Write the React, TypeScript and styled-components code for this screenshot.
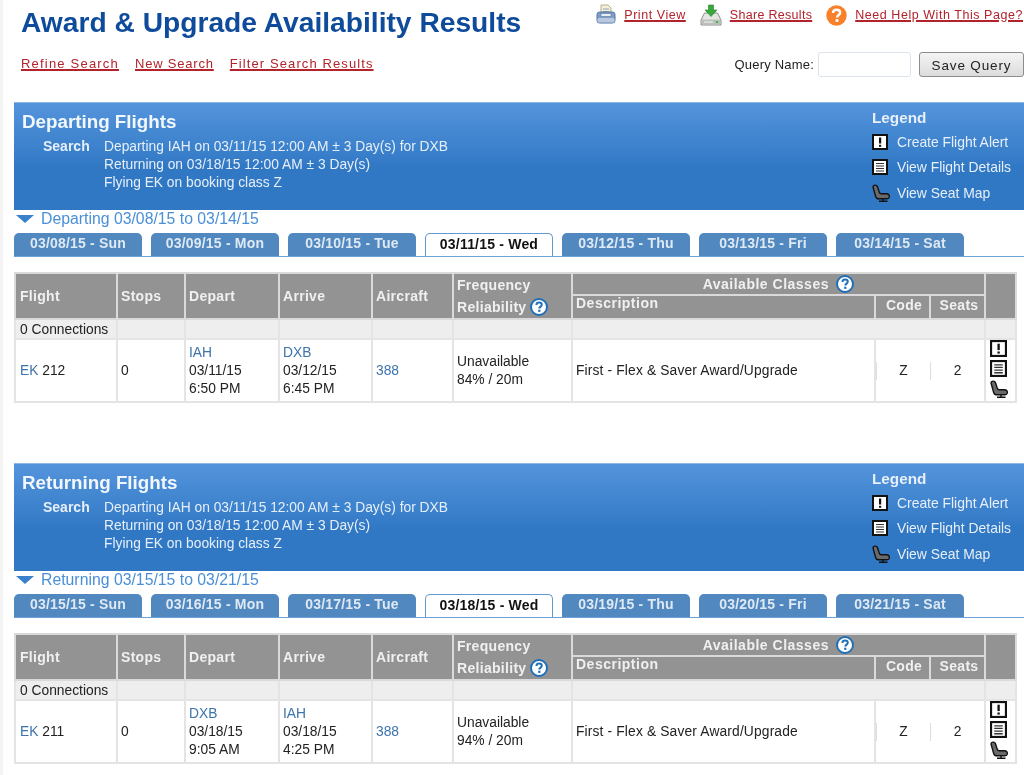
import React from "react";
import styled, { createGlobalStyle } from "styled-components";

const GlobalStyle = createGlobalStyle`
  html, body {
    margin: 0;
    padding: 0;
    background: #fff;
  }
  body {
    font-family: "Liberation Sans", Arial, sans-serif;
    color: #222;
  }
`;

type Leg = {
  title: string;
  range: string;
  tabs: string[];
  flight: string;
  from: string;
  to: string;
  departDate: string;
  departTime: string;
  arriveDate: string;
  arriveTime: string;
  reliability: string;
};

const legs: Leg[] = [
  {
    title: "Departing Flights",
    range: "Departing 03/08/15 to 03/14/15",
    tabs: ["03/08/15 - Sun", "03/09/15 - Mon", "03/10/15 - Tue", "03/11/15 - Wed", "03/12/15 - Thu", "03/13/15 - Fri", "03/14/15 - Sat"],
    flight: "212",
    from: "IAH",
    to: "DXB",
    departDate: "03/11/15",
    departTime: "6:50 PM",
    arriveDate: "03/12/15",
    arriveTime: "6:45 PM",
    reliability: "84% / 20m",
  },
  {
    title: "Returning Flights",
    range: "Returning 03/15/15 to 03/21/15",
    tabs: ["03/15/15 - Sun", "03/16/15 - Mon", "03/17/15 - Tue", "03/18/15 - Wed", "03/19/15 - Thu", "03/20/15 - Fri", "03/21/15 - Sat"],
    flight: "211",
    from: "DXB",
    to: "IAH",
    departDate: "03/18/15",
    departTime: "9:05 AM",
    arriveDate: "03/18/15",
    arriveTime: "4:25 PM",
    reliability: "94% / 20m",
  },
];

const AlertIcon = ({ size = 16 }: { size?: number }) => (
  <svg width={size} height={size} viewBox="0 0 16 16">
    <rect x="1" y="1" width="14" height="14" fill="#fff" stroke="#111" strokeWidth="2" />
    <rect x="7" y="3.5" width="2.2" height="6" fill="#111" />
    <rect x="7" y="10.8" width="2.2" height="2" fill="#111" />
  </svg>
);

const DetailsIcon = ({ size = 16 }: { size?: number }) => (
  <svg width={size} height={size} viewBox="0 0 16 16">
    <rect x="1" y="1" width="14" height="14" fill="#fff" stroke="#111" strokeWidth="2" />
    <path d="M4 4.5h8M4 7h8M4 9.5h8M4 12h8" stroke="#333" strokeWidth="1.2" />
  </svg>
);

const SeatIcon = ({ size = 18 }: { size?: number }) => (
  <svg width={size} height={size} viewBox="0 0 18 18">
    <path
      d="M1 3C1 .8 4.6 .4 5.4 2.6L7.4 8.6C7.7 9.4 8.3 9.8 9.2 9.8H14.5C16.6 9.8 17.6 11.2 17.3 13C17.1 14.2 16.2 14.8 15 14.8H7C5 14.8 4.2 14 3.6 12.4Z"
      fill="#6a6a6a"
      stroke="#111"
      strokeWidth="1.4"
    />
    <path d="M7 17.2h8.5M11 15v2" stroke="#111" strokeWidth="1.4" />
  </svg>
);

const HelpBadge = () => (
  <svg width="18" height="18" viewBox="0 0 18 18">
    <circle cx="9" cy="9" r="8" fill="#fff" stroke="#1f6fb8" strokeWidth="2" />
    <path d="M6.4 7C6.5 5.4 7.6 4.6 9.1 4.6C10.7 4.6 11.8 5.5 11.8 6.8C11.8 8.6 9.3 8.6 9.3 10.6" fill="none" stroke="#1f6fb8" strokeWidth="2" />
    <rect x="8.2" y="11.7" width="2.2" height="2.2" fill="#1f6fb8" />
  </svg>
);

const PrintIcon = () => (
  <svg width="20" height="22" viewBox="0 0 20 22">
    <path d="M5 1h7l3 3v8H5z" fill="#f6efd8" stroke="#b9ad8c" />
    <path d="M7 5h6M7 7.5h6" stroke="#8fa2bb" />
    <rect x="1" y="8" width="18" height="11" rx="2.5" fill="#7f9fc8" stroke="#55759f" />
    <rect x="1.5" y="14" width="17" height="4.5" rx="1.5" fill="#b8c9df" />
    <rect x="5" y="9.5" width="10" height="3" fill="#e8eef6" stroke="#55759f" strokeWidth=".6" />
  </svg>
);

const ShareIcon = () => (
  <svg width="22" height="22" viewBox="0 0 22 22">
    <path d="M4.5 9H17.5L21 16V21H1V16Z" fill="#e4e6e2" stroke="#8c8f8a" />
    <rect x="2" y="15.5" width="18" height="5" fill="#bcc0bb" />
    <path d="M4 18h9" stroke="#f5f5f5" />
    <rect x="16" y="17" width="2" height="2" fill="#3dbb3d" />
    <path d="M8.5 1H13.5V6H17L11 12.5L5 6H8.5Z" fill="#37a83a" stroke="#25822a" strokeWidth=".6" />
  </svg>
);

const OrangeHelp = () => (
  <svg width="21" height="21" viewBox="0 0 21 21">
    <circle cx="10.5" cy="10.5" r="10.2" fill="#f9812a" />
    <path d="M7 8C7.1 5.9 8.6 4.8 10.6 4.8C12.7 4.8 14.1 6 14.1 7.7C14.1 10 11 10 11 12.6" fill="none" stroke="#fff" strokeWidth="2.4" />
    <rect x="9.6" y="14.1" width="2.8" height="2.8" fill="#fff" />
  </svg>
);

const FlightSection = ({ leg }: { leg: Leg }) => (
  <Section>
    <Banner>
      <BannerMain>
        <BannerTitle>{leg.title}</BannerTitle>
        <SearchRow>
          <SearchLabel>Search</SearchLabel>
          <SearchLines>
            <div>Departing IAH on 03/11/15 12:00 AM ± 3 Day(s) for DXB</div>
            <div>Returning on 03/18/15 12:00 AM ± 3 Day(s)</div>
            <div>Flying EK on booking class Z</div>
          </SearchLines>
        </SearchRow>
      </BannerMain>
      <Legend>
        <LegendTitle>Legend</LegendTitle>
        <LegendRow><AlertIcon /><span>Create Flight Alert</span></LegendRow>
        <LegendRow><DetailsIcon /><span>View Flight Details</span></LegendRow>
        <LegendRow><SeatIcon /><span>View Seat Map</span></LegendRow>
      </Legend>
    </Banner>

    <RangeHeading>
      <Triangle />
      {leg.range}
    </RangeHeading>

    <TabStrip>
      {leg.tabs.map((tab, i) => (
        <Tab key={tab} $active={i === 3}>{tab}</Tab>
      ))}
    </TabStrip>

    <Results>
      <colgroup>
        <col style={{ width: 102 }} />
        <col style={{ width: 68 }} />
        <col style={{ width: 94 }} />
        <col style={{ width: 93 }} />
        <col style={{ width: 81 }} />
        <col style={{ width: 119 }} />
        <col style={{ width: 303 }} />
        <col style={{ width: 55 }} />
        <col style={{ width: 55 }} />
        <col style={{ width: 31 }} />
      </colgroup>
      <thead>
        <tr>
          <Th rowSpan={2}>Flight</Th>
          <Th rowSpan={2}>Stops</Th>
          <Th rowSpan={2}>Depart</Th>
          <Th rowSpan={2}>Arrive</Th>
          <Th rowSpan={2}>Aircraft</Th>
          <FreqTh rowSpan={2}>
            <div>Frequency</div>
            <FreqLine>Reliability <HelpBadge /></FreqLine>
          </FreqTh>
          <ClassesTh colSpan={3}>Available Classes <HelpBadge /></ClassesTh>
          <Th rowSpan={2} />
        </tr>
        <tr>
          <DescTh>Description</DescTh>
          <SubTh>Code</SubTh>
          <SubTh>Seats</SubTh>
        </tr>
      </thead>
      <tbody>
        <tr>
          <ConnCell>0 Connections</ConnCell>
          {Array.from({ length: 5 }).map((_, i) => <ConnCell key={i} />)}
          <ConnCell colSpan={3} />
          <ConnCell />
        </tr>
        <tr>
          <Td><BlueText>EK</BlueText> {leg.flight}</Td>
          <Td>0</Td>
          <Td><BlueText>{leg.from}</BlueText><br />{leg.departDate}<br />{leg.departTime}</Td>
          <Td><BlueText>{leg.to}</BlueText><br />{leg.arriveDate}<br />{leg.arriveTime}</Td>
          <Td><BlueText>388</BlueText></Td>
          <Td>Unavailable<br />{leg.reliability}</Td>
          <DescTd>First - Flex &amp; Saver Award/Upgrade</DescTd>
          <ValueTd><Divided>Z</Divided></ValueTd>
          <ValueTd><Divided>2</Divided></ValueTd>
          <ActionTd>
            <AlertIcon size={17} />
            <DetailsIcon size={17} />
            <SeatIcon size={18} />
          </ActionTd>
        </tr>
      </tbody>
    </Results>
  </Section>
);

export default function App() {
  return (
    <Page>
      <GlobalStyle />
      <Header>
        <HeaderLeft>
          <Title>Award &amp; Upgrade Availability Results</Title>
          <NavLinks>
            <NavLink href="#">Refine Search</NavLink>
            <NavLink href="#" $spacing={0.8}>New Search</NavLink>
            <NavLink href="#" $spacing={1.1}>Filter Search Results</NavLink>
          </NavLinks>
        </HeaderLeft>
        <HeaderRight>
          <Tools>
            <Tool><PrintIcon /><ToolLink href="#">Print View</ToolLink></Tool>
            <Tool><ShareIcon /><ToolLink href="#" $spacing={0.3}>Share Results</ToolLink></Tool>
            <Tool><OrangeHelp /><ToolLink href="#">Need Help With This Page?</ToolLink></Tool>
          </Tools>
          <QueryForm>
            <QueryLabel>Query Name:</QueryLabel>
            <QueryInput />
            <SaveButton>Save Query</SaveButton>
          </QueryForm>
        </HeaderRight>
      </Header>
      {legs.map((leg) => (
        <FlightSection key={leg.title} leg={leg} />
      ))}
    </Page>
  );
}

const Page = styled.div`
  width: 1024px;
  height: 775px;
  box-sizing: border-box;
  overflow: hidden;
  border-left: 3px solid #f4f4f4;
  padding-left: 11px;
  filter: blur(0.3px);
`;

const Header = styled.header`
  display: flex;
  justify-content: space-between;
  height: 102px;
`;

const HeaderLeft = styled.div`
  padding-left: 7px;
`;

const Title = styled.h1`
  margin: 0;
  padding-top: 6px;
  font-size: 28.2px;
  line-height: 32px;
  font-weight: 700;
  color: #0f4b9b;
  white-space: nowrap;
`;

const NavLinks = styled.nav`
  display: flex;
  gap: 16px;
  margin-top: 18px;
`;

const NavLink = styled.a<{ $spacing?: number }>`
  font-size: 13px;
  line-height: 16px;
  letter-spacing: ${({ $spacing }) => $spacing ?? 1.2}px;
  color: #b2232b;
  text-decoration: underline;
  text-decoration-thickness: 1.5px;
  white-space: nowrap;
`;

const ToolLink = styled.a<{ $spacing?: number }>`
  font-size: 12.5px;
  line-height: 15px;
  letter-spacing: ${({ $spacing }) => $spacing ?? 0.55}px;
  color: #b2232b;
  text-decoration: underline;
  text-decoration-thickness: 1.5px;
  white-space: nowrap;
`;

const HeaderRight = styled.div`
  display: flex;
  flex-direction: column;
  align-items: flex-end;
`;

const Tools = styled.div`
  display: flex;
  gap: 14px;
  padding-top: 4px;
  padding-right: 1px;
  height: 22px;
`;

const Tool = styled.div`
  display: flex;
  align-items: center;
  gap: 8px;
`;

const QueryForm = styled.div`
  display: flex;
  align-items: center;
  margin-top: 26px;
`;

const QueryLabel = styled.label`
  font-size: 13px;
  letter-spacing: 0.2px;
  color: #222;
  margin-right: 4px;
`;

const QueryInput = styled.input`
  box-sizing: border-box;
  width: 93px;
  height: 25px;
  border: 1px solid #dde3ea;
  border-radius: 3px;
  background: #fff;
  margin-right: 8px;
`;

const SaveButton = styled.button`
  box-sizing: border-box;
  width: 105px;
  height: 25px;
  padding: 2px 0 0;
  border: 1px solid #8d8d8d;
  border-radius: 3px;
  background: linear-gradient(#f4f4f4, #dcdcdc);
  font-family: inherit;
  font-size: 13.5px;
  letter-spacing: 0.85px;
  color: #222;
`;

const Section = styled.section`
  height: 361px;
`;

const Banner = styled.div`
  display: flex;
  justify-content: space-between;
  box-sizing: border-box;
  height: 108px;
  padding: 8px 0 0 8px;
  color: #fff;
  border-top: 1px solid #8db8e4;
  background: linear-gradient(#5494dc 0%, #3a80cb 45%, #3178c4 60%, #3178c4 100%);
`;

const BannerMain = styled.div`
  display: flex;
  flex-direction: column;
`;

const BannerTitle = styled.div`
  font-size: 18.8px;
  line-height: 22px;
  font-weight: 700;
  color: #f2f7fc;
`;

const SearchRow = styled.div`
  display: flex;
  margin-top: 5px;
  font-size: 13.8px;
  line-height: 18px;
  color: #e6eff9;
`;

const SearchLabel = styled.div`
  box-sizing: border-box;
  width: 82px;
  padding-left: 21px;
  font-size: 14px;
  line-height: 16px;
  font-weight: 700;
`;

const SearchLines = styled.div`
  white-space: nowrap;
`;

const Legend = styled.div`
  width: 152px;
  margin-top: -1px;
  color: #e6eff9;
`;

const LegendTitle = styled.div`
  font-size: 15.3px;
  line-height: 16px;
  font-weight: 700;
  margin-bottom: 3px;
`;

const LegendRow = styled.div`
  display: grid;
  grid-template-columns: 16px auto;
  align-items: center;
  gap: 9px;
  height: 25.5px;
  white-space: nowrap;
  font-size: 13.9px;
`;

const RangeHeading = styled.div`
  display: flex;
  align-items: center;
  box-sizing: border-box;
  height: 24px;
  padding: 0 0 6px 2px;
  font-size: 15.8px;
  color: #4a8fd6;
`;

const Triangle = styled.span`
  width: 0;
  height: 0;
  margin-right: 7px;
  border-left: 9px solid transparent;
  border-right: 9px solid transparent;
  border-top: 8px solid #3a80cb;
`;

const TabStrip = styled.div`
  display: flex;
  gap: 9px;
  height: 23px;
  box-sizing: border-box;
  border-bottom: 1px solid #6ea2d6;
`;

const Tab = styled.div<{ $active?: boolean }>`
  box-sizing: border-box;
  width: 128px;
  height: 23px;
  border-radius: 5px 5px 0 0;
  text-align: center;
  font-size: 14px;
  font-weight: 700;
  line-height: 21px;
  letter-spacing: 0.2px;
  color: ${({ $active }) => ($active ? "#111" : "#dfe9f3")};
  background: ${({ $active }) => ($active ? "#fff" : "#5088bf")};
  border: ${({ $active }) => ($active ? "1px solid #5f98d2" : "none")};
  border-bottom: none;
  margin-top: -1px;
`;

const Results = styled.table`
  table-layout: fixed;
  width: 1001px;
  margin-top: 15px;
  border-collapse: collapse;
  border: 1px solid #e2e2e2;
  font-size: 13.8px;
  color: #222;
`;

const Th = styled.th`
  background: #939393;
  color: #f0f0f0;
  font-size: 14px;
  letter-spacing: 0.3px;
  font-weight: 700;
  text-align: left;
  padding: 0 3px;
  border: 2px solid #dadada;
  &:first-child {
    padding-left: 4px;
  }
`;

const FreqTh = styled(Th)`
  line-height: 22px;
  padding: 0 3px;
`;

const FreqLine = styled.div`
  display: flex;
  align-items: center;
  gap: 4px;
`;

const ClassesTh = styled(Th)`
  height: 19px;
  text-align: center;
  letter-spacing: 0.5px;
  padding-bottom: 1px;
  svg {
    vertical-align: -4px;
    margin-left: 3px;
  }
`;

const DescTh = styled(Th)`
  height: 22px;
  vertical-align: top;
  letter-spacing: 0.5px;
  line-height: 14px;
  &:first-child {
    padding-left: 3px;
  }
`;

const SubTh = styled(Th)`
  text-align: center;
  padding: 0 0 5px 3px;
`;

const ConnCell = styled.td`
  height: 18px;
  padding: 0 4px;
  background: #eee;
  border: 2px solid #e4e4e4;
  white-space: nowrap;
  font-size: 13.8px;
  line-height: 15px;
`;

const Td = styled.td`
  height: 61px;
  padding: 0 3px;
  line-height: 18px;
  background: #fff;
  border: 2px solid #e4e4e4;
  white-space: nowrap;
  overflow: hidden;
  &:first-child {
    padding-left: 4px;
  }
`;

const DescTd = styled(Td)`
  letter-spacing: 0.15px;
`;

const ValueTd = styled(Td)`
  border-left: none;
  border-right: none;
  padding: 0;
  text-align: center;
`;

const Divided = styled.div`
  border-left: 1px solid #dedede;
  line-height: 18px;
`;

const ActionTd = styled(Td)`
  padding: 0 0 0 4px;
  line-height: 0;
  svg {
    display: block;
    margin-bottom: 3px;
  }
`;

const BlueText = styled.span`
  color: #3e74ab;
`;
